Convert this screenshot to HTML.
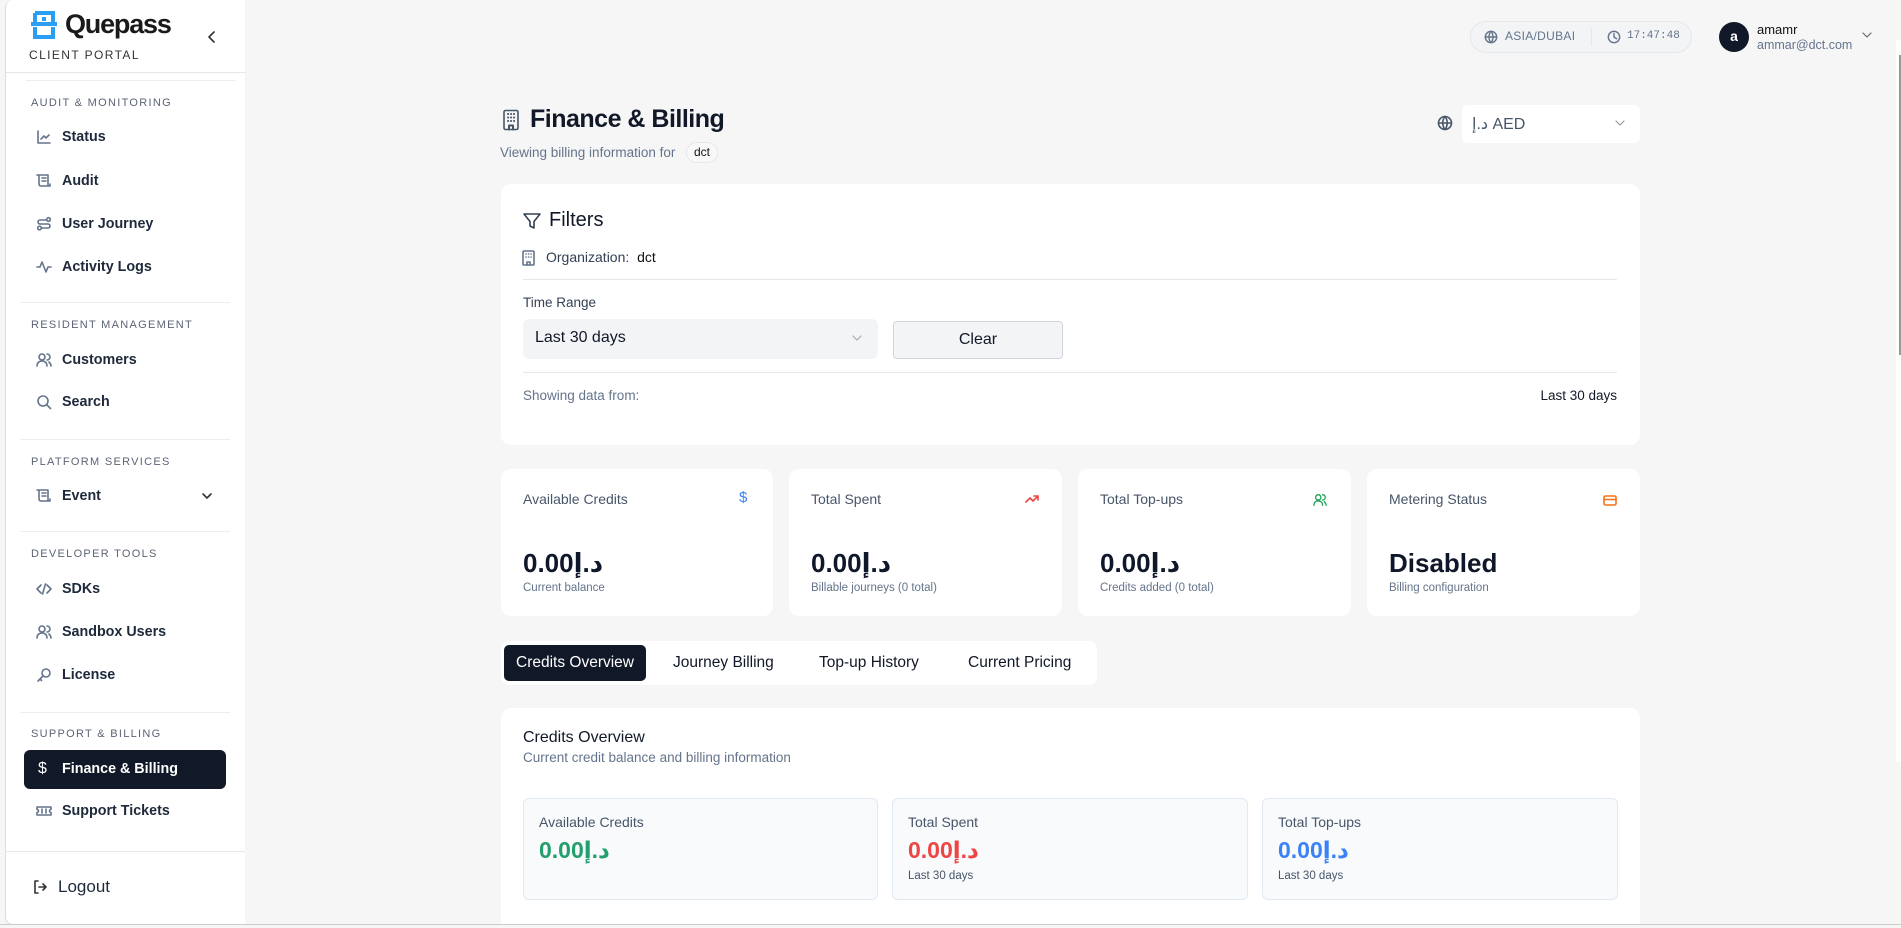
<!DOCTYPE html>
<html><head><meta charset="utf-8"><style>
*{box-sizing:border-box;margin:0;padding:0}
body{width:1901px;height:928px;overflow:hidden;background:#f6f6f6;font-family:"Liberation Sans","DejaVu Sans",sans-serif;color:#0f172a;position:relative}
.a{position:absolute;white-space:nowrap}
.sb{position:absolute;left:5px;top:0;width:240px;height:925px;background:#fff;border-left:1px solid #ddd;border-bottom:1px solid #ddd;border-radius:8px 0 0 8px}
.lbl{position:absolute;left:31px;font-size:11px;letter-spacing:1.3px;color:#5b6475;font-weight:500}
.it{position:absolute;left:62px;font-size:14.3px;font-weight:bold;color:#1e293b;line-height:20px}
.ic{position:absolute;left:36px;width:16px;height:16px}
.dv{position:absolute;left:20px;width:210px;height:1px;background:#eceef1}
.card{position:absolute;background:#fff;border-radius:10px}
.svg{fill:none;stroke-width:1.6;stroke-linecap:round;stroke-linejoin:round}
.sl{font-size:14px;color:#475569}
.sv{font-size:26px;font-weight:bold;color:#0f172a}
.ss{font-size:11.5px;color:#64748b}
.box{position:absolute;top:798px;height:102px;background:#f8fafc;border:1px solid #e2e8f0;border-radius:6px}
</style></head><body>
<div class="sb">
  <svg class="a" style="left:23px;top:10px" width="30" height="30" viewBox="0 0 30 30"><path d="M6 3h18v10M6 3v10M2 14h26M6 17v10h18V17" stroke="#2a9df4" stroke-width="4" fill="none"/><rect x="13" y="7" width="4" height="4" fill="#2a9df4"/></svg>
  <div class="a" style="left:59px;top:9px;font-size:27px;font-weight:bold;letter-spacing:-1.2px;color:#1a1a1a">Quepass</div>
  <div class="a" style="left:23px;top:48px;font-size:12px;letter-spacing:1.4px;color:#333;font-weight:500">CLIENT PORTAL</div>
  <svg class="a" style="left:200px;top:30px" width="12" height="14" viewBox="0 0 12 14"><path d="M8 2 3 7l5 5" class="svg" stroke="#333"/></svg>
  <div class="a" style="left:0;top:72px;width:240px;height:1px;background:#e5e7eb"></div>
  <div class="dv" style="top:80px"></div>
</div>
<div class="lbl" style="top:97px">AUDIT &amp; MONITORING</div>
<svg class="ic svg" style="top:129px" viewBox="0 0 16 16" stroke="#64748b"><path d="M2 2v12h12M5 10l3-3 2 2 3-3"/></svg>
<div class="it" style="top:127px">Status</div>
<svg class="ic svg" style="top:173px" viewBox="0 0 16 16" stroke="#64748b"><path d="M3 2h9v11H5a2 2 0 0 1-2-2V2zM1 2h2M6 5h4M6 8h4M12 13h2v-2"/></svg>
<div class="it" style="top:171px">Audit</div>
<svg class="ic svg" style="top:216px" viewBox="0 0 16 16" stroke="#64748b"><circle cx="3.5" cy="12" r="1.8"/><circle cx="12.5" cy="3.5" r="1.8"/><path d="M5.5 12H12a2 2 0 0 0 0-4H4a2 2 0 0 1 0-4h6.5"/></svg>
<div class="it" style="top:214px">User Journey</div>
<svg class="ic svg" style="top:259px" viewBox="0 0 16 16" stroke="#64748b"><path d="M1 8h3l2-5 4 10 2-5h3"/></svg>
<div class="it" style="top:257px">Activity Logs</div>
<div class="dv" style="top:302px"></div>
<div class="lbl" style="top:319px">RESIDENT MANAGEMENT</div>
<svg class="ic svg" style="top:352px" viewBox="0 0 16 16" stroke="#64748b"><circle cx="6" cy="5" r="3"/><path d="M1 14c0-3 2-5 5-5s5 2 5 5M11 2a3 3 0 0 1 0 6M13 10c1 1 2 2 2 4"/></svg>
<div class="it" style="top:350px">Customers</div>
<svg class="ic svg" style="top:394px" viewBox="0 0 16 16" stroke="#64748b"><circle cx="7" cy="7" r="5"/><path d="m11 11 3.5 3.5"/></svg>
<div class="it" style="top:392px">Search</div>
<div class="dv" style="top:439px"></div>
<div class="lbl" style="top:456px">PLATFORM SERVICES</div>
<svg class="ic svg" style="top:488px" viewBox="0 0 16 16" stroke="#64748b"><path d="M3 2h9v11H5a2 2 0 0 1-2-2V2zM1 2h2M6 5h4M6 8h4M12 13h2v-2"/></svg>
<div class="it" style="top:486px">Event</div>
<svg class="a svg" style="left:201px;top:491px" width="12" height="10" viewBox="0 0 12 10"><path d="m2 3 4 4 4-4" stroke="#333"/></svg>
<div class="dv" style="top:531px"></div>
<div class="lbl" style="top:548px">DEVELOPER TOOLS</div>
<svg class="ic svg" style="top:581px" viewBox="0 0 16 16" stroke="#64748b"><path d="M5 4 1 8l4 4M11 4l4 4-4 4M9.5 3l-3 10"/></svg>
<div class="it" style="top:579px">SDKs</div>
<svg class="ic svg" style="top:624px" viewBox="0 0 16 16" stroke="#64748b"><circle cx="6" cy="5" r="3"/><path d="M1 14c0-3 2-5 5-5s5 2 5 5M11 2a3 3 0 0 1 0 6M13 10c1 1 2 2 2 4"/></svg>
<div class="it" style="top:622px">Sandbox Users</div>
<svg class="ic svg" style="top:667px" viewBox="0 0 16 16" stroke="#64748b"><circle cx="10" cy="6" r="4"/><path d="M7 9 2 14M4 12l1.5 1.5"/></svg>
<div class="it" style="top:665px">License</div>
<div class="dv" style="top:712px"></div>
<div class="lbl" style="top:728px">SUPPORT &amp; BILLING</div>
<div class="a" style="left:24px;top:750px;width:202px;height:39px;background:#111827;border-radius:6px"></div>
<div class="a" style="left:38px;top:760px;color:#fff;font-size:16px">$</div>
<div class="it" style="top:759px;color:#fff">Finance &amp; Billing</div>
<svg class="ic svg" style="top:803px" viewBox="0 0 16 16" stroke="#64748b"><path d="M1 4h14v2.5a1.5 1.5 0 0 0 0 3V12H1V9.5a1.5 1.5 0 0 0 0-3zM6 6v4M10 6v4"/></svg>
<div class="it" style="top:801px">Support Tickets</div>
<div class="a" style="left:5px;top:851px;width:240px;height:1px;background:#e5e7eb"></div>
<svg class="a svg" style="left:32px;top:879px" width="16" height="16" viewBox="0 0 16 16" stroke="#333"><path d="M6 2H3v12h3M7 8h7M11 5l3 3-3 3"/></svg>
<div class="a" style="left:58px;top:877px;font-size:17px;color:#1e293b">Logout</div>

<!-- top bar -->
<div class="a" style="left:1470px;top:21px;width:222px;height:32px;border:1px solid #e5e7eb;border-radius:16px;background:#f3f4f6"></div>
<svg class="a svg" style="left:1484px;top:30px" width="14" height="14" viewBox="0 0 16 16" stroke="#64748b"><circle cx="8" cy="8" r="6.5"/><path d="M1.5 8h13M8 1.5c-3 3.5-3 9.5 0 13M8 1.5c3 3.5 3 9.5 0 13"/></svg>
<div class="a" style="left:1505px;top:29px;font-size:12px;color:#64748b;letter-spacing:.3px">ASIA/DUBAI</div>
<div class="a" style="left:1591px;top:28px;width:1px;height:18px;background:#e5e7eb"></div>
<svg class="a svg" style="left:1607px;top:30px" width="14" height="14" viewBox="0 0 16 16" stroke="#64748b"><circle cx="8" cy="8" r="6.5"/><path d="M8 4v4l3 2"/></svg>
<div class="a" style="left:1627px;top:30px;font-size:11px;color:#64748b;font-family:'Liberation Mono',monospace">17:47:48</div>
<div class="a" style="left:1719px;top:22px;width:30px;height:30px;border-radius:50%;background:#111827;color:#fff;text-align:center;line-height:29px;font-size:14px;font-weight:bold">a</div>
<div class="a" style="left:1757px;top:22px;font-size:13px;color:#111">amamr</div>
<div class="a" style="left:1757px;top:38px;font-size:12.5px;color:#64748b">ammar@dct.com</div>
<svg class="a svg" style="left:1861px;top:30px" width="12" height="10" viewBox="0 0 12 10"><path d="m2 3 4 4 4-4" stroke="#666" stroke-width="1.2"/></svg>
<div class="a" style="left:1896px;top:40px;width:5px;height:722px;background:#fff"></div>
<div class="a" style="left:1899px;top:55px;width:2px;height:300px;background:#999"></div>

<!-- heading -->
<svg class="a svg" style="left:502px;top:109px" width="18" height="22" viewBox="0 0 18 22" stroke="#475569"><rect x="2" y="1.5" width="14" height="19" rx="1.5"/><path d="M7 20.5v-4h4v4M6 5h.1M9 5h.1M12 5h.1M6 8.5h.1M9 8.5h.1M12 8.5h.1M6 12h.1M9 12h.1M12 12h.1" stroke-width="2"/></svg>
<div class="a" style="left:530px;top:105px;font-size:25px;font-weight:bold;letter-spacing:-.5px;color:#111827">Finance &amp; Billing</div>
<div class="a" style="left:500px;top:145px;font-size:13.5px;color:#64748b">Viewing billing information for</div>
<div class="a" style="left:686px;top:142px;height:21px;padding:0 7px;border:1px solid #e5e7eb;border-radius:11px;font-size:12px;line-height:19px;color:#111;background:#f8f8f8">dct</div>
<svg class="a svg" style="left:1437px;top:115px" width="16" height="16" viewBox="0 0 16 16" stroke="#475569"><circle cx="8" cy="8" r="6.5"/><path d="M1.5 8h13M8 1.5c-3 3.5-3 9.5 0 13M8 1.5c3 3.5 3 9.5 0 13"/></svg>
<div class="card" style="left:1462px;top:105px;width:178px;height:38px;border-radius:6px"></div>
<div class="a" style="left:1472px;top:114px;font-size:16px;color:#475569">د.إ AED</div>
<svg class="a svg" style="left:1614px;top:118px" width="12" height="10" viewBox="0 0 12 10"><path d="m2 3 4 4 4-4" stroke="#999" stroke-width="1.2"/></svg>

<!-- filters -->
<div class="card" style="left:501px;top:184px;width:1139px;height:261px"></div>
<svg class="a svg" style="left:522px;top:211px" width="20" height="20" viewBox="0 0 20 20" stroke="#334155"><path d="M2 3h16l-6 7.5V17l-4-2v-4.5z"/></svg>
<div class="a" style="left:549px;top:209px;font-size:20px;font-weight:500;color:#111827">Filters</div>
<svg class="a svg" style="left:522px;top:250px" width="13" height="16" viewBox="0 0 13 16" stroke="#64748b"><rect x="1" y="1" width="11" height="14" rx="1"/><path d="M5 15v-3h3v3M4 4h.1M6.5 4h.1M9 4h.1M4 7h.1M6.5 7h.1M9 7h.1"/></svg>
<div class="a" style="left:546px;top:249px;font-size:14px;color:#334155">Organization:&nbsp; <span style="color:#111">dct</span></div>
<div class="a" style="left:523px;top:279px;width:1094px;height:1px;background:#e5e7eb"></div>
<div class="a" style="left:523px;top:295px;font-size:13.5px;color:#334155">Time Range</div>
<div class="a" style="left:523px;top:319px;width:355px;height:40px;background:#f3f4f6;border-radius:6px"></div>
<div class="a" style="left:535px;top:329px;font-size:16px;color:#111827">Last 30 days</div>
<svg class="a svg" style="left:851px;top:333px" width="12" height="10" viewBox="0 0 12 10"><path d="m2 3 4 4 4-4" stroke="#aaa" stroke-width="1.2"/></svg>
<div class="a" style="left:893px;top:321px;width:170px;height:38px;background:#f3f4f6;border:1px solid #d1d5db;border-radius:4px;text-align:center;line-height:36px;font-size:16px;color:#111827">Clear</div>
<div class="a" style="left:523px;top:372px;width:1094px;height:1px;background:#e5e7eb"></div>
<div class="a" style="left:523px;top:388px;font-size:13.5px;color:#64748b">Showing data from:</div>
<div class="a" style="left:1440px;top:388px;width:177px;text-align:right;font-size:13.5px;color:#111827">Last 30 days</div>

<!-- stats -->
<div class="card" style="left:501px;top:469px;width:272px;height:147px"></div>
<div class="card" style="left:789px;top:469px;width:273px;height:147px"></div>
<div class="card" style="left:1078px;top:469px;width:273px;height:147px"></div>
<div class="card" style="left:1367px;top:469px;width:273px;height:147px"></div>
<div class="a sl" style="left:523px;top:491px">Available Credits</div>
<div class="a" style="left:739px;top:489px;color:#3b82f6;font-size:15px">$</div>
<div class="a sv" style="left:523px;top:548px">0.00د.إ</div>
<div class="a ss" style="left:523px;top:582px">Current balance</div>
<div class="a sl" style="left:811px;top:491px">Total Spent</div>
<svg class="a svg" style="left:1025px;top:493px" width="14" height="12" viewBox="0 0 14 12" stroke="#ef4444"><path d="M1 9l4-4 3 3 5-5M9 3h4v4"/></svg>
<div class="a sv" style="left:811px;top:548px">0.00د.إ</div>
<div class="a ss" style="left:811px;top:582px">Billable journeys (0 total)</div>
<div class="a sl" style="left:1100px;top:491px">Total Top-ups</div>
<svg class="a svg" style="left:1313px;top:493px" width="14" height="14" viewBox="0 0 16 16" stroke="#22a35a"><circle cx="6" cy="5" r="3"/><path d="M1 14c0-3 2-5 5-5s5 2 5 5M11 2a3 3 0 0 1 0 6M13 10c1 1 2 2 2 4"/></svg>
<div class="a sv" style="left:1100px;top:548px">0.00د.إ</div>
<div class="a ss" style="left:1100px;top:582px">Credits added (0 total)</div>
<div class="a sl" style="left:1389px;top:491px">Metering Status</div>
<svg class="a svg" style="left:1603px;top:495px" width="14" height="11" viewBox="0 0 14 11" stroke="#f97316"><rect x="1" y="1" width="12" height="9" rx="1.5"/><path d="M1 4.5h12"/></svg>
<div class="a sv" style="left:1389px;top:548px">Disabled</div>
<div class="a ss" style="left:1389px;top:582px">Billing configuration</div>

<!-- tabs -->
<div class="card" style="left:501px;top:641px;width:596px;height:44px;border-radius:8px"></div>
<div class="a" style="left:504px;top:645px;width:142px;height:36px;background:#111827;border-radius:5px"></div>
<div class="a" style="left:504px;top:654px;width:142px;text-align:center;font-size:15.5px;color:#fff">Credits Overview</div>
<div class="a" style="left:673px;top:654px;font-size:15.5px;color:#111827">Journey Billing</div>
<div class="a" style="left:819px;top:654px;font-size:15.5px;color:#111827">Top-up History</div>
<div class="a" style="left:968px;top:654px;font-size:15.5px;color:#111827">Current Pricing</div>

<!-- credits overview -->
<div class="card" style="left:501px;top:708px;width:1139px;height:216px;border-radius:10px 10px 0 0"></div>
<div class="a" style="left:523px;top:729px;font-size:16px;font-weight:500;color:#111827">Credits Overview</div>
<div class="a" style="left:523px;top:750px;font-size:13.5px;color:#64748b">Current credit balance and billing information</div>
<div class="box" style="left:523px;width:355px"></div>
<div class="box" style="left:892px;width:356px"></div>
<div class="box" style="left:1262px;width:356px"></div>
<div class="a sl" style="left:539px;top:814px">Available Credits</div>
<div class="a" style="left:539px;top:837px;font-size:23px;font-weight:bold;color:#22a06b">0.00د.إ</div>
<div class="a sl" style="left:908px;top:814px">Total Spent</div>
<div class="a" style="left:908px;top:837px;font-size:23px;font-weight:bold;color:#ef4444">0.00د.إ</div>
<div class="a ss" style="left:908px;top:870px;color:#475569">Last 30 days</div>
<div class="a sl" style="left:1278px;top:814px">Total Top-ups</div>
<div class="a" style="left:1278px;top:837px;font-size:23px;font-weight:bold;color:#3b82f6">0.00د.إ</div>
<div class="a ss" style="left:1278px;top:870px;color:#475569">Last 30 days</div>
<div class="a" style="left:0;top:924px;width:1901px;height:4px;background:#f6f6f6;border-top:1px solid #ccc"></div>
</body></html>
